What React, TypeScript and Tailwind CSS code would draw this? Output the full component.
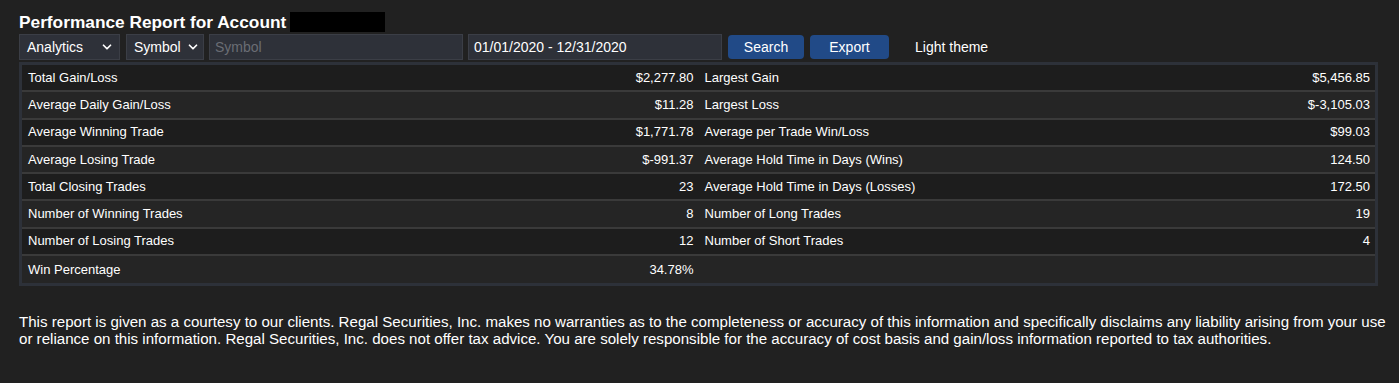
import { ChevronDown } from 'lucide-react';

const ROWS = [
  ['Total Gain/Loss', '$2,277.80', 'Largest Gain', '$5,456.85'],
  ['Average Daily Gain/Loss', '$11.28', 'Largest Loss', '$-3,105.03'],
  ['Average Winning Trade', '$1,771.78', 'Average per Trade Win/Loss', '$99.03'],
  ['Average Losing Trade', '$-991.37', 'Average Hold Time in Days (Wins)', '124.50'],
  ['Total Closing Trades', '23', 'Average Hold Time in Days (Losses)', '172.50'],
  ['Number of Winning Trades', '8', 'Number of Long Trades', '19'],
  ['Number of Losing Trades', '12', 'Number of Short Trades', '4'],
  ['Win Percentage', '34.78%', '', ''],
];

export default function App() {
  return (
    <div className="min-h-[383px] bg-[#212121] text-white pl-[19px] pt-[11px] font-['Liberation_Sans',Arial,sans-serif]">
      {/* titulo */}
      <div className="flex items-center h-[21px]">
        <h1 className="text-[17.3px] font-bold leading-none pt-[2px]">Performance Report for Account</h1>
        <div className="ml-[4px] w-[95px] h-[20px] bg-black" />
      </div>

      {/* barra de filtros */}
      <div className="flex items-center mt-[2px] h-[26px] text-[14px]">
        <div className="w-[101px] h-[26px] bg-[#2e3139] border border-[#3b3e46] flex items-center justify-between pl-[7px] pr-[5px]">
          <span>Analytics</span>
          <ChevronDown size={14} strokeWidth={3} />
        </div>
        <div className="ml-[6px] w-[78px] h-[26px] bg-[#2e3139] border border-[#3b3e46] flex items-center justify-between pl-[7px] pr-[3px]">
          <span>Symbol</span>
          <ChevronDown size={14} strokeWidth={3} />
        </div>
        <div className="ml-[5px] w-[254px] h-[26px] bg-[#2e3139] border border-[#3b3e46] flex items-center px-[5px] text-[#6a6d74]">
          Symbol
        </div>
        <div className="ml-[5px] w-[254px] h-[26px] bg-[#2e3139] border border-[#3b3e46] flex items-center px-[5px]">
          01/01/2020 - 12/31/2020
        </div>
        <button className="ml-[6px] w-[76px] h-[24px] rounded-[4px] bg-[#214a87] flex items-center justify-center">Search</button>
        <button className="ml-[6px] w-[79px] h-[24px] rounded-[4px] bg-[#214a87] flex items-center justify-center">Export</button>
        <span className="ml-[26px]">Light theme</span>
      </div>

      {/* resultados */}
      <div className="mt-[2px] w-[1359px] border-[3px] border-[#2d3139] text-[13px]">
        {ROWS.map((r, i) => (
          <div
            key={i}
            className={`flex h-[27.25px] items-center ${i < ROWS.length - 1 ? 'border-b-2 border-[#3a3a3a]' : ''} ${i % 2 ? 'bg-[#252525]' : 'bg-[#1d1d1d]'}`}
          >
            <div className="w-1/2 flex justify-between pl-[6px] pr-[5px]">
              <span>{r[0]}</span>
              <span>{r[1]}</span>
            </div>
            <div className="w-1/2 flex justify-between pl-[6px] pr-[5px]">
              <span>{r[2]}</span>
              <span>{r[3]}</span>
            </div>
          </div>
        ))}
      </div>

      <p className="mt-[27px] w-[1374px] text-[15.1px] leading-[17px]">
        This report is given as a courtesy to our clients. Regal Securities, Inc. makes no warranties as to the completeness or accuracy of this information and specifically disclaims any liability arising from your use or reliance on this information. Regal Securities, Inc. does not offer tax advice. You are solely responsible for the accuracy of cost basis and gain/loss information reported to tax authorities.
      </p>
    </div>
  );
}
